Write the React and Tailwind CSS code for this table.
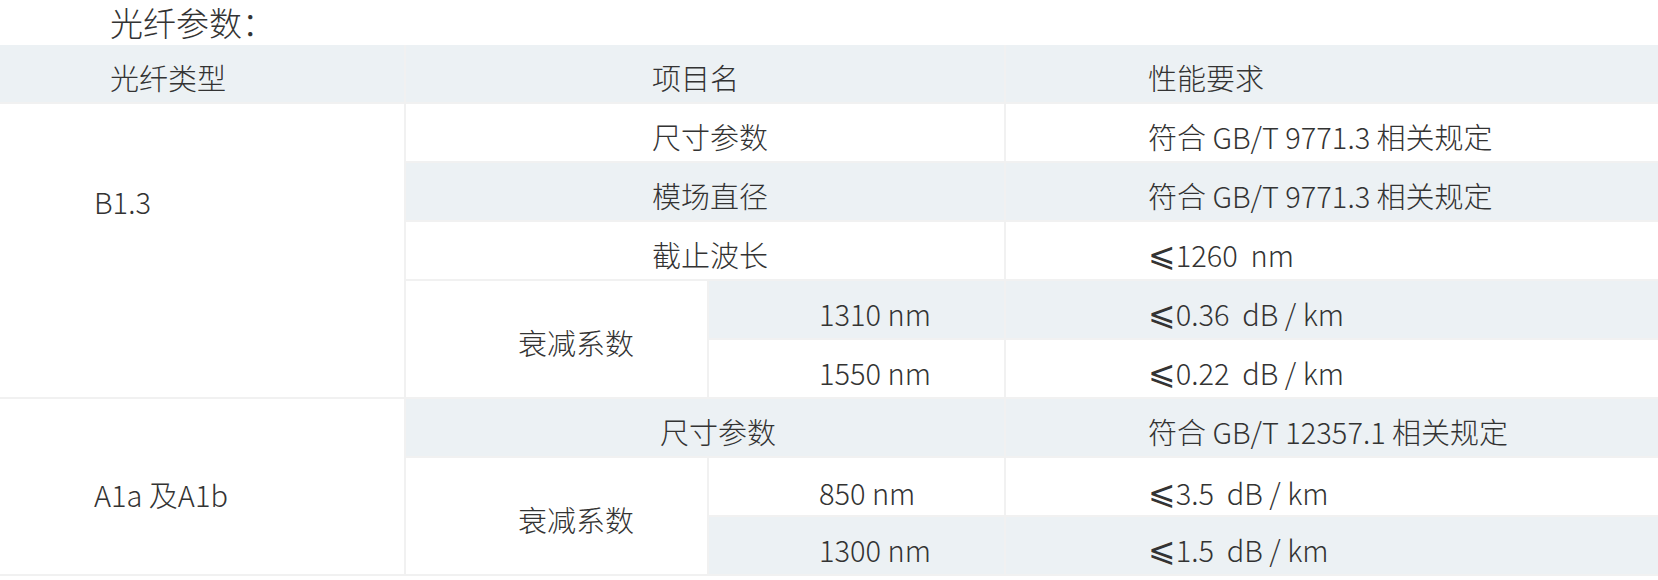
import React from "react";

const FONT = { fontFamily: '"Noto Sans CJK SC", "Noto Sans", sans-serif' };

function Cell({ children, className = "" }) {
  return (
    <div className={`flex text-[29px] leading-none text-[#333333] whitespace-pre ${className}`}>
      {children}
    </div>
  );
}

function Le() {
  return (
    <span className="text-[33px] leading-none font-normal" style={{ fontFamily: '"DejaVu Sans", sans-serif' }}>
      ⩽
    </span>
  );
}

export default function App() {
  const bg = "bg-[#ecf1f4]";
  const wh = "bg-white";
  const mid = "items-center pt-[7px]";
  return (
    <div className="w-[1658px] h-[580px] bg-white overflow-hidden font-light" style={FONT}>
      <div className="h-[45px] pl-[110px] pt-[4px] flex items-start text-[33px] leading-[36px] text-[#333333]">
        光纤参数：
      </div>
      <div className="grid grid-cols-[404px_301px_295px_1fr] grid-rows-[repeat(9,57px)] gap-[2px] bg-[#f1f1f1] border-b-2 border-[#f1f1f1]">
        {/* header */}
        <Cell className={`${bg} ${mid} pl-[110px]`}>光纤类型</Cell>
        <Cell className={`${bg} ${mid} col-span-2 pl-[246px]`}>项目名</Cell>
        <Cell className={`${bg} ${mid} pl-[142px]`}>性能要求</Cell>

        {/* B1.3 */}
        <Cell className={`${wh} row-span-5 items-start pt-[83px] pl-[94px]`}>B1.3</Cell>
        <Cell className={`${wh} ${mid} col-span-2 pl-[246px]`}>尺寸参数</Cell>
        <Cell className={`${wh} ${mid} pl-[142px]`}>符合 GB/T 9771.3 相关规定</Cell>

        <Cell className={`${bg} ${mid} col-span-2 pl-[246px]`}>模场直径</Cell>
        <Cell className={`${bg} ${mid} pl-[142px]`}>符合 GB/T 9771.3 相关规定</Cell>

        <Cell className={`${wh} ${mid} col-span-2 pl-[246px]`}>截止波长</Cell>
        <Cell className={`${wh} ${mid} pl-[142px]`}><Le />1260  nm</Cell>

        <Cell className={`${wh} ${mid} row-span-2 pl-[112px]`}>衰减系数</Cell>
        <Cell className={`${bg} ${mid} pl-[110px]`}>1310 nm</Cell>
        <Cell className={`${bg} ${mid} pl-[142px]`}><Le />0.36  dB / km</Cell>

        <Cell className={`${wh} ${mid} pl-[110px]`}>1550 nm</Cell>
        <Cell className={`${wh} ${mid} pl-[142px]`}><Le />0.22  dB / km</Cell>

        {/* A1a */}
        <Cell className={`${wh} row-span-3 items-center pt-[16px] pl-[94px]`}>A1a 及A1b</Cell>
        <Cell className={`${bg} ${mid} col-span-2 pl-[254px]`}>尺寸参数</Cell>
        <Cell className={`${bg} ${mid} pl-[142px]`}>符合 GB/T 12357.1 相关规定</Cell>

        <Cell className={`${wh} ${mid} row-span-2 pl-[112px]`}>衰减系数</Cell>
        <Cell className={`${wh} items-center pt-[12px] pl-[110px]`}>850 nm</Cell>
        <Cell className={`${wh} items-center pt-[12px] pl-[142px]`}><Le />3.5  dB / km</Cell>

        <Cell className={`${bg} ${mid} pl-[110px]`}>1300 nm</Cell>
        <Cell className={`${bg} ${mid} pl-[142px]`}><Le />1.5  dB / km</Cell>
      </div>
    </div>
  );
}
